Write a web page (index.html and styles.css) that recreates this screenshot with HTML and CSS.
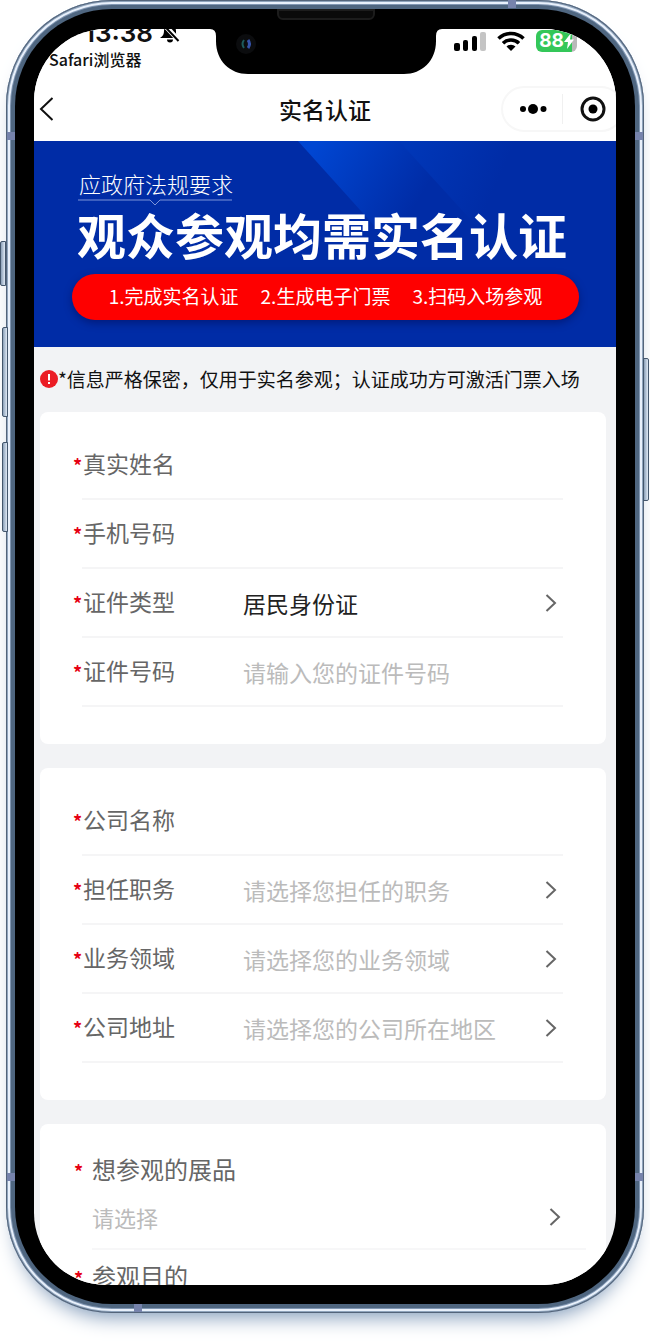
FILE: index.html
```html
<!DOCTYPE html>
<html lang="zh-CN">
<head>
  <meta charset="UTF-8">
  <meta name="viewport" content="width=device-width, initial-scale=1.0">
  <title>实名认证</title>
  <link rel="stylesheet" href="styles.css">
</head>
<body>
<svg class="defs" width="0" height="0">
  <symbol id="arrow" viewBox="0 0 12 20">
    <path d="M1.5 2 10 10 1.5 18" fill="none" stroke="currentColor" stroke-width="2"/>
  </symbol>
  <linearGradient id="beam1" gradientUnits="userSpaceOnUse" x1="20" y1="0" x2="120" y2="60">
    <stop offset="0" stop-color="#0046d2"/>
    <stop offset="1" stop-color="#002ca6"/>
  </linearGradient>
  <linearGradient id="beam2" gradientUnits="userSpaceOnUse" x1="110" y1="0" x2="200" y2="40">
    <stop offset="0" stop-color="#0037b8"/>
    <stop offset="1" stop-color="#002ca6"/>
  </linearGradient>
</svg>

<div class="phone">
  <span class="side-button mute"></span>
  <span class="side-button volume-up"></span>
  <span class="side-button volume-down"></span>
  <span class="side-button power"></span>
  <span class="antenna left top"></span>
  <span class="antenna left bottom"></span>
  <span class="antenna right top"></span>
  <span class="antenna right bottom"></span>
  <span class="antenna edge-top"></span>
  <span class="antenna edge-bottom"></span>

  <div class="bezel">
    <span class="speaker"></span>
    <div class="screen">
      <svg class="notch" viewBox="0 0 232 45" width="232" height="45">
        <path d="M0 0H232Q226 0 226 7V12C226 32 212 45 194 45H38C20 45 6 32 6 12V7Q6 0 0 0Z"/>
        <circle cx="36" cy="15" r="10" fill="#0b0c0e"/>
        <path d="M34 11Q31 15 34 19" fill="none" stroke="#1d5a5c" stroke-width="2"/>
        <path d="M38 11Q41 15 38 19" fill="none" stroke="#3552a8" stroke-width="3"/>
      </svg>

      <div class="status-bar">
        <div class="status-left">
          <div class="time">
            <span>13:38</span>
            <svg viewBox="0 0 20 20" width="20" height="20">
              <path d="M0 15C3 13 4 11 4 8a6 6 0 0 1 12 0c0 3 0 5 3 7ZM7 16.500h6a3 3 0 0 1-6 0Z"/>
              <path d="M2.500 0 19.500 18" stroke="#fff" stroke-width="5"/>
              <path d="M1.500 0 18.500 18" stroke="#000" stroke-width="2"/>
            </svg>
          </div>
          <div class="back-app">Safari浏览器</div>
        </div>
        <div class="status-right">
          <svg viewBox="0 0 32 20" width="32" height="20">
            <rect x="0" y="12" width="6" height="8" rx="2"/>
            <rect x="9" y="9" width="5" height="11" rx="2"/>
            <rect x="18" y="5" width="5" height="15" rx="2"/>
            <rect x="26" y="1" width="6" height="19" rx="2" fill="#c4c4c4"/>
          </svg>
          <svg viewBox="0 0 28 20" width="28" height="20">
            <g fill="none" stroke="#000" stroke-width="3.600">
              <path d="M1.500 7.500a18 18 0 0 1 25 0"/>
              <path d="M6 12.200a11.500 11.500 0 0 1 16 0"/>
            </g>
            <path d="M9.500 15.500a6.500 6.500 0 0 1 9 0L14 20Z"/>
          </svg>
          <div class="battery">
            <span>88</span>
            <svg viewBox="0 0 10 16" width="10" height="16"><path d="M7 0 0 9h4L3 16 10 6.500H6Z" fill="#fff"/></svg>
          </div>
        </div>
      </div>

      <header class="nav">
        <button class="back" type="button" aria-label="返回">
          <svg viewBox="0 0 15 26" width="15" height="26"><path d="M13.500 2 2 13 13.500 24" fill="none" stroke="#111" stroke-width="2"/></svg>
        </button>
        <h1>实名认证</h1>
        <div class="capsule">
          <button type="button" aria-label="更多">
            <svg viewBox="0 0 28 12" width="28" height="12"><circle cx="4" cy="6" r="3"/><circle cx="14" cy="6" r="5"/><circle cx="24.500" cy="6" r="3"/></svg>
          </button>
          <button class="close" type="button" aria-label="关闭">
            <svg viewBox="0 0 26 26" width="26" height="26"><circle cx="13" cy="13" r="11" fill="none" stroke="#111" stroke-width="3"/><circle cx="13" cy="13" r="4.500"/></svg>
          </button>
        </div>
      </header>

      <section class="banner">
        <svg class="beams" viewBox="0 0 240 100" width="240" height="100">
          <path d="M0 0H200L240 100H90Z" fill="url(#beam1)"/>
          <path d="M101 0H240V100H192Z" fill="url(#beam2)"/>
        </svg>
        <p class="banner-sub">应政府法规要求</p>
        <svg class="banner-line" viewBox="0 0 154 8" width="154" height="8"><path d="M0 1H72L77 6 82 1H154" fill="none" stroke="#7c93d8"/></svg>
        <h2>观众参观均需实名认证</h2>
        <ol class="steps">
          <li>1.完成实名认证</li>
          <li>2.生成电子门票</li>
          <li>3.扫码入场参观</li>
        </ol>
      </section>

      <p class="notice">
        <svg viewBox="0 0 18 18" width="18" height="18"><circle cx="9" cy="9" r="9" fill="#eb1c24"/><path d="M9 4V10.500M9 12V14" stroke="#fff" stroke-width="2"/></svg>
        <span>*信息严格保密，仅用于实名参观；认证成功方可激活门票入场</span>
      </p>

      <form>
        <div class="card">
          <div class="row">
            <label for="name">真实姓名</label>
            <input id="name" type="text">
          </div>
          <div class="row">
            <label for="phone">手机号码</label>
            <input id="phone" type="tel">
          </div>
          <div class="row">
            <label for="idType">证件类型</label>
            <select id="idType" class="filled"><option>居民身份证</option></select>
            <svg class="arrow"><use href="#arrow"/></svg>
          </div>
          <div class="row">
            <label for="idNumber">证件号码</label>
            <input id="idNumber" type="text" placeholder="请输入您的证件号码">
          </div>
        </div>

        <div class="card">
          <div class="row">
            <label for="company">公司名称</label>
            <input id="company" type="text">
          </div>
          <div class="row">
            <label for="job">担任职务</label>
            <select id="job"><option>请选择您担任的职务</option></select>
            <svg class="arrow"><use href="#arrow"/></svg>
          </div>
          <div class="row">
            <label for="field">业务领域</label>
            <select id="field"><option>请选择您的业务领域</option></select>
            <svg class="arrow"><use href="#arrow"/></svg>
          </div>
          <div class="row">
            <label for="address">公司地址</label>
            <select id="address"><option>请选择您的公司所在地区</option></select>
            <svg class="arrow"><use href="#arrow"/></svg>
          </div>
        </div>

        <div class="card survey">
          <div class="question">
            <label for="exhibits">想参观的展品</label>
            <div class="picker">
              <select id="exhibits"><option>请选择</option></select>
              <svg class="arrow"><use href="#arrow"/></svg>
            </div>
          </div>
          <div class="question">
            <label for="purpose">参观目的</label>
          </div>
        </div>
      </form>
    </div>
  </div>
</div>
</body>
</html>
```
FILE: styles.css
```css
* {
  box-sizing: border-box;
}

body {
  margin: 0;
  padding: 0 6px 30px;
  background: #fff;
  color: #111;
  font-family: "Noto Sans CJK SC", sans-serif;
  overflow: hidden;
}

h1, h2, p, ol {
  margin: 0;
  padding: 0;
}

button, input, select {
  margin: 0;
  padding: 0;
  border: 0;
  background: none;
  font-family: inherit;
  appearance: none;
}

.defs {
  position: absolute;
}

/* phone body */
.phone {
  position: relative;
  padding: 9px;
  border-radius: 106px;
  background: #4f6680;
  box-shadow:
    inset 0 0 0 1px #53647a,
    inset 0 0 0 2px #8fa4bc,
    inset 0 0 0 4px #e8f0fb,
    inset 0 0 0 5px #8096b2,
    0 14px 20px -10px #7f99b8;
}

.bezel {
  position: relative;
  padding: 20px 19px 19px;
  border-radius: 97px;
  background: #000;
}

.screen {
  position: relative;
  aspect-ratio: 582 / 1256;
  border-radius: 72px;
  background: #f2f3f5;
  overflow: hidden;
}

.side-button {
  position: absolute;
  left: -6px;
  width: 6px;
  border: 1px solid #43566c;
  border-radius: 2px 0 0 2px;
  background: linear-gradient(90deg, #8ba0b8, #dfe9f5);
}

.mute {
  top: 241px;
  height: 45px;
}

.volume-up {
  top: 327px;
  left: -4px;
  height: 90px;
}

.volume-down {
  top: 442px;
  left: -4px;
  height: 90px;
}

.power {
  top: 358px;
  left: auto;
  right: -5px;
  height: 143px;
  border-radius: 0 2px 2px 0;
}

.antenna {
  position: absolute;
  width: 8px;
  height: 8px;
  background: #7683ac;
}

.antenna.left {
  left: 1px;
}

.antenna.right {
  right: 1px;
}

.antenna.top {
  top: 132px;
}

.antenna.bottom {
  bottom: 132px;
}

.edge-top {
  top: 0;
  right: 128px;
}

.edge-bottom {
  bottom: 1px;
  left: 128px;
}

.speaker {
  position: absolute;
  top: 0;
  left: 50%;
  width: 98px;
  height: 11px;
  margin-left: -48px;
  border: 2px solid #1c1c1c;
  border-radius: 0 0 6px 6px;
  background: #0a0a0a;
}

.notch {
  position: absolute;
  top: 0;
  left: 50%;
  margin-left: -115px;
}

/* status bar */
.status-bar {
  display: flex;
  justify-content: space-between;
  height: 49px;
  padding: 0 39px 0 15px;
  background: #fff;
}

.time {
  display: flex;
  align-items: center;
  gap: 7px;
  height: 8px;
  padding-left: 35px;
  font: 600 26px/8px Inter, sans-serif;
}

.back-app {
  margin-top: 12px;
  font-size: 16px;
  font-weight: 500;
  line-height: 20px;
}

.status-right {
  display: flex;
  gap: 11px;
  height: 24px;
  align-items: center;
}

.battery {
  display: flex;
  align-items: center;
  justify-content: center;
  width: 41px;
  height: 22px;
  border-radius: 6px;
  background: linear-gradient(90deg, #34c759 88%, #b9b9b9 88%);
  color: #fff;
  font: 700 19px/22px Inter, sans-serif;
}

/* nav */
.nav {
  display: grid;
  grid-template-columns: 1fr auto 1fr;
  align-items: center;
  height: 63px;
  padding-bottom: 2px;
  background: #fff;
}

.nav button {
  display: flex;
  align-items: center;
  justify-content: center;
}

.back {
  justify-self: start;
  padding-left: 5px;
}

.nav h1 {
  font-size: 23px;
  font-weight: 500;
  line-height: 32px;
}

.capsule {
  display: flex;
  align-items: center;
  justify-self: end;
  width: 123px;
  height: 46px;
  margin-right: -8px;
  border: 2px solid #f7f7f7;
  border-radius: 23px;
}

.capsule button {
  flex: 1;
  height: 30px;
}

.capsule .close {
  border-left: 1px solid #f0f0f0;
}

/* banner */
.banner {
  position: relative;
  padding: 26px 37px 27px 38px;
  background: #002ca6;
  color: #fff;
}

.banner > * {
  position: relative;
}

.banner .beams {
  position: absolute;
  top: 0;
  left: 264px;
}

.banner-sub {
  padding-left: 7px;
  font-size: 22px;
  font-weight: 300;
  line-height: 32px;
}

.banner-line {
  display: block;
  margin-left: 6px;
}

.banner h2 {
  padding-left: 5px;
  font-size: 49px;
  font-weight: 700;
  line-height: 54px;
  white-space: nowrap;
}

.steps {
  display: flex;
  justify-content: center;
  gap: 22px;
  margin-top: 13px;
  padding-bottom: 2px;
  border-radius: 23px;
  background: #fe0000;
  box-shadow: 0 3px 8px rgba(0, 0, 60, 0.4);
  font-size: 19px;
  line-height: 44px;
  list-style: none;
  white-space: nowrap;
}

.notice {
  display: flex;
  align-items: center;
  height: 65px;
  padding: 0 0 2px 6px;
  font-size: 19px;
  line-height: 28px;
  white-space: nowrap;
}

/* form */
.card {
  margin: 0 10px 24px 6px;
  padding: 19px 43px 37px 42px;
  border-radius: 8px;
  background: #fff;
}

.row {
  display: flex;
  align-items: center;
  height: 69px;
  padding-right: 6px;
  border-bottom: 2px solid #f5f5f6;
}

.row label {
  flex: none;
  width: 161px;
  padding: 0 0 4px 1px;
  color: #666;
  font-size: 23px;
}

.row label::before,
.question label::before {
  content: "*";
  display: inline-block;
  width: 10px;
  margin-left: -10px;
  color: #e60012;
  font-size: 18px;
  font-weight: 700;
}

input, select {
  flex: 1;
  min-width: 0;
  height: 40px;
  color: #bbb;
  font-size: 23px;
}

input, .filled {
  color: #222;
}

input::placeholder {
  color: #bbb;
}

.arrow {
  flex: none;
  width: 12px;
  height: 20px;
  color: #666;
}

.survey {
  padding: 23px 20px 24px 52px;
}

.question {
  margin-bottom: 4px;
  border-bottom: 2px solid #f7f7f8;
}

.question label {
  display: block;
  color: #666;
  font-size: 24px;
  line-height: 44px;
}

.question label::before {
  width: 18px;
  margin-left: -18px;
}

.picker {
  display: flex;
  align-items: center;
  height: 55px;
  padding: 0 25px 8px 0;
}

.picker select {
  font-size: 22px;
}
```
